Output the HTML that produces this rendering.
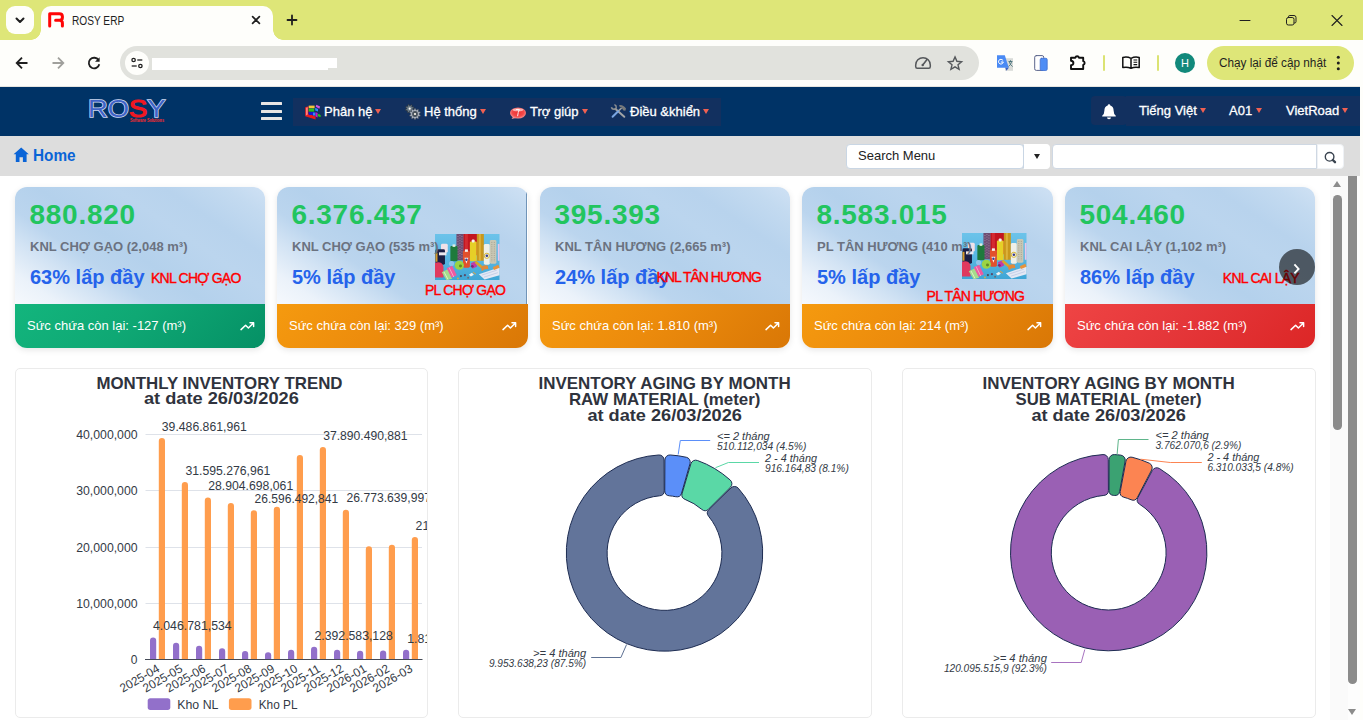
<!DOCTYPE html>
<html lang="vi">
<head>
<meta charset="utf-8">
<title>ROSY ERP</title>
<style>
*{box-sizing:border-box;margin:0;padding:0}
html,body{width:1363px;height:720px;overflow:hidden;background:#fefefb;font-family:"Liberation Sans",sans-serif;}
.abs{position:absolute}
#root{position:relative;width:1363px;height:720px;overflow:hidden;background:#fefefb}
/* ---------- browser chrome ---------- */
#tabbar{left:0;top:0;width:1363px;height:40px;background:#dee678}
#tabdd{left:6px;top:6px;width:28px;height:28px;border-radius:9px;background:#fefefb}
#tab{left:41px;top:6px;width:232px;height:34px;background:#fefefb;border-radius:10px 10px 0 0}
#tab:before,#tab:after{content:"";position:absolute;bottom:0;width:10px;height:10px;background:radial-gradient(circle at 0 0,rgba(0,0,0,0) 9.5px,#fefefb 10px)}
#tab:before{left:-10px}
#tab:after{right:-10px;background:radial-gradient(circle at 100% 0,rgba(0,0,0,0) 9.5px,#fefefb 10px)}
#tabtitle{left:72px;top:14px;font-size:12px;line-height:14px;color:#1f1f1f;white-space:nowrap;transform:scaleX(0.845);transform-origin:0 0}
#toolbar{left:0;top:40px;width:1360px;height:47px;background:#fefefb;border-radius:10px 10px 0 0}
#omni{left:120px;top:46px;width:859px;height:34px;border-radius:17px;background:#e1e2dd}
#siteinfo{left:125px;top:51px;width:24px;height:24px;border-radius:12px;background:#fefefb}
#redact1{left:152px;top:58px;width:185px;height:10px;background:#fff}
#redact2{left:152px;top:68px;width:176px;height:2px;background:#fff}
.sep{width:2px;height:16px;top:55px;background:#dbe373;border-radius:1px}
#avatar{left:1175px;top:53px;width:20px;height:20px;border-radius:10px;background:#12897b;color:#fff;font-size:11px;line-height:20px;text-align:center}
#update{left:1207px;top:46px;width:147px;height:34px;border-radius:17px;background:#dee678}
#updtxt{left:1219px;top:56px;font-size:12px;line-height:14px;color:#1f1f1f;white-space:nowrap;transform:scaleX(0.98);transform-origin:0 0}
/* ---------- app ---------- */
#nav{left:0;top:87px;width:1360px;height:49px;background:#003366}
#menubg{left:293px;top:98px;width:428px;height:28px;background:#12305f}
#bellbg{left:1091px;top:96px;width:36px;height:29px;border-radius:4px;background:#12305f}
#rmenubg{left:1126px;top:96px;width:234px;height:30px;background:#12305f}
.mi{color:#fff;font-size:13px;line-height:18px;top:103px;white-space:nowrap;-webkit-text-stroke:0.3px #fff}
.tri{width:0;height:0;border-left:3.6px solid transparent;border-right:3.6px solid transparent;border-top:5.4px solid #f06052;top:108.8px}
#graybar{left:0;top:136px;width:1360px;height:40px;background:#dddddd}
#home{left:33.3px;top:146.2px;font-size:16.4px;line-height:18px;font-weight:bold;color:#0a64d7;white-space:nowrap;transform:scaleX(0.935);transform-origin:0 0}
.inp{background:#fff;border:1px solid #cfd8e3;top:144px;height:25px}
/* ---------- content ---------- */
#content{left:0;top:176px;width:1330px;height:544px;background:#fff;overflow:hidden}

.card{top:11px;width:250px;height:161px;border-radius:12px;overflow:hidden;box-shadow:0 2px 6px rgba(0,0,0,.10)}
.cbg{left:0;top:0;width:250px;height:118px;background:linear-gradient(34deg,#f6f9fd 0%,#ebf2fa 11%,#d2e3f4 23%,#bbd5ee 33%,#b4d1ec 46%,#bbd5ee 64%,#b8d3ed 76%,#c3daf0 90%,#cfe1f4 100%)}
.cnum{left:14.5px;top:14.2px;font-size:28px;line-height:27px;font-weight:bold;color:#22c55e;white-space:nowrap;letter-spacing:0.72px}
.clab{z-index:2;left:15px;top:52.6px;font-size:13px;line-height:13px;font-weight:bold;color:#6b7280;white-space:nowrap}
.cpct{left:15px;top:79.5px;font-size:20px;line-height:20px;font-weight:bold;color:#2563eb;white-space:nowrap}
.cred{font-size:14px;line-height:14px;color:#ff0000;white-space:nowrap;letter-spacing:-0.75px;-webkit-text-stroke:0.4px #ff0000;margin-top:-1px}
.cfoot{left:0;top:117px;width:100%;height:44px}
.cft{left:12px;top:15px;font-size:13px;line-height:13px;color:#fff;white-space:nowrap}
#nextbtn{left:1279.2px;top:73px;width:35.6px;height:36px;border-radius:18px;background:rgba(0,0,0,.585)}
.ccard{top:192px;width:413px;height:350px;border:1px solid #ebebeb;border-radius:5px;background:#fff}
</style>
</head>
<body>
<div id="root">
<!-- browser chrome -->
<div id="tabbar" class="abs"></div>
<div id="tabdd" class="abs"></div>
<div id="tab" class="abs"></div>
<div id="tabtitle" class="abs">ROSY ERP</div>
<div id="toolbar" class="abs"></div>
<div class="abs" style="left:0;top:86px;width:1360px;height:1px;background:#e6e5e0"></div>
<div id="omni" class="abs"></div>
<div id="siteinfo" class="abs"></div>
<div id="redact1" class="abs"></div>
<div id="redact2" class="abs"></div>
<div class="abs sep" style="left:1103px"></div>
<div class="abs sep" style="left:1157px"></div>
<div id="avatar" class="abs">H</div>
<div id="update" class="abs"></div>
<div id="updtxt" class="abs">Chạy lại để cập nhật</div>
<!-- CHROME-ICONS-START -->
<svg class="abs" style="left:0;top:0" width="1363" height="87" viewBox="0 0 1363 87" fill="none" stroke-linecap="round" stroke-linejoin="round">
<!-- tab dropdown chevron -->
<polyline points="16.5,18.5 20,22 23.5,18.5" stroke="#1f1f1f" stroke-width="2"/>
<!-- favicon R -->
<path d="M49.7 26 V13.8 H59.3 Q62.4 13.8 62.4 16.6 V17.4 Q62.4 20.2 59.3 20.2 H55.6 M59.3 20.2 Q62.4 20.2 62.4 23 V26" stroke="#ff0505" stroke-width="3"/>
<!-- tab close -->
<path d="M252.6 16.6 L259.4 23.4 M259.4 16.6 L252.6 23.4" stroke="#1f1f1f" stroke-width="1.7"/>
<!-- new tab -->
<path d="M287.5 20 H296.5 M292 15.5 V24.5" stroke="#1f1f1f" stroke-width="1.8"/>
<!-- window controls -->
<path d="M1240 20.5 H1250" stroke="#1f1f1f" stroke-width="1"/>
<rect x="1286.5" y="17.5" width="7.5" height="7.5" rx="1.8" stroke="#1f1f1f" stroke-width="1"/>
<path d="M1288.5 17.3 V16.8 Q1288.5 15.5 1289.8 15.5 H1294 Q1296 15.5 1296 17.5 V21.7 Q1296 23 1294.6 23 H1294.2" stroke="#1f1f1f" stroke-width="1"/>
<path d="M1332 15.5 L1342 25.5 M1342 15.5 L1332 25.5" stroke="#1f1f1f" stroke-width="1.1"/>
<!-- back -->
<path d="M27.5 63 H17 M22 57.7 L16.7 63 L22 68.3" stroke="#1f1f1f" stroke-width="1.8" stroke-linecap="butt" stroke-linejoin="miter"/>
<!-- forward -->
<path d="M52.5 63 H63 M58 57.7 L63.3 63 L58 68.3" stroke="#a0a09c" stroke-width="1.8" stroke-linecap="butt" stroke-linejoin="miter"/>
<!-- reload -->
<path d="M98.6 60.2 A5.3 5.3 0 1 0 99.3 64.2" stroke="#1f1f1f" stroke-width="1.8" stroke-linecap="butt"/>
<path d="M99.6 57.2 V61.8 H95 Z" fill="#1f1f1f" stroke="none"/>
<!-- site info -->
<circle cx="133.6" cy="60" r="1.7" stroke="#1f1f1f" stroke-width="1.3"/>
<path d="M137.3 60 H142.3" stroke="#1f1f1f" stroke-width="1.3" stroke-linecap="butt"/>
<circle cx="140.4" cy="66" r="1.7" stroke="#1f1f1f" stroke-width="1.3"/>
<path d="M131.7 66 H136.7" stroke="#1f1f1f" stroke-width="1.3" stroke-linecap="butt"/>
<!-- gauge -->
<path d="M917.2 68.3 Q915.7 68.3 915.7 66.5 V65 A7.3 7.3 0 0 1 930.3 65 V66.5 Q930.3 68.3 928.8 68.3 Z" stroke="#55585b" stroke-width="1.5"/>
<path d="M922.6 65.2 L927 59.6" stroke="#55585b" stroke-width="1.6"/>
<circle cx="922.7" cy="65" r="1.2" fill="#55585b"/>
<!-- star -->
<path d="M955 56.9 L956.9 61.3 L961.6 61.7 L958 64.8 L959.1 69.4 L955 66.9 L950.9 69.4 L952 64.8 L948.4 61.7 L953.1 61.3 Z" stroke="#55585b" stroke-width="1.4" stroke-linejoin="miter"/>
<!-- translate -->
<rect x="1005" y="58.2" width="8" height="12.6" fill="#d9dbd8"/>
<path d="M1009 61.5 h3 M1010.5 60.6 v1 M1011.7 61.8 q-0.8 3 -3 4.6 M1009.3 62 q0.8 3 3 4.4" stroke="#3d6b74" stroke-width="0.8"/>
<path d="M997 55.3 H1004.8 L1008.8 67.8 H997 Z" fill="#4a8af4"/>
<path d="M1005.3 67.8 H1008.8 L1006.4 70.8 Z" fill="#3a5fc0"/>
<path d="M1002.9 60.3 A2.4 2.4 0 1 0 1003.3 62 H1001.2" stroke="#fff" stroke-width="1"/>
<!-- phones -->
<rect x="1034.7" y="55.6" width="9" height="14.8" rx="1.6" fill="#fff" stroke="#5a648a" stroke-width="1"/>
<rect x="1040.2" y="58.3" width="7" height="12.2" rx="1.4" fill="#4e8df5" stroke="#3f6fd0" stroke-width="0.8"/>
<!-- puzzle -->
<path d="M1071 57.7 H1075.3 A1.9 1.9 0 0 1 1079 57.7 H1083.2 V61.2 A1.9 1.9 0 0 1 1083.2 64.9 V69 H1071 V65.2 Q1073.4 65 1073.4 63 Q1073.4 61 1071 60.8 Z" stroke="#111" stroke-width="1.9" stroke-linejoin="round"/>
<!-- reading mode -->
<path d="M1131 58.3 Q1127 56.3 1122.8 57.5 V67.6 Q1127 66.5 1131 68.3 Q1135 66.5 1139.2 67.6 V57.5 Q1135 56.3 1131 58.3 V68.3" stroke="#111" stroke-width="1.5"/>
<path d="M1133.5 60 H1137.2 M1133.5 62.3 H1137.2 M1133.5 64.6 H1137.2" stroke="#111" stroke-width="1.1" stroke-linecap="butt"/>
<!-- dots -->
<circle cx="1338.3" cy="57.3" r="1.5" fill="#1f1f1f"/><circle cx="1338.3" cy="63" r="1.5" fill="#1f1f1f"/><circle cx="1338.3" cy="68.7" r="1.5" fill="#1f1f1f"/>
</svg>
<!-- CHROME-ICONS-END -->
<!-- app nav -->
<div id="nav" class="abs"></div>
<div id="menubg" class="abs"></div>
<div id="bellbg" class="abs"></div>
<div id="rmenubg" class="abs"></div>
<!-- NAV-ITEMS-START -->
<svg class="abs" style="left:80px;top:92px" width="100" height="36" viewBox="80 92 100 36">
<text x="88" y="117.2" font-family="Liberation Sans, sans-serif" font-size="24.6" font-weight="normal" textLength="77.5" lengthAdjust="spacingAndGlyphs" stroke="#cfd9f3" stroke-width="1.5" paint-order="stroke" fill="#3f63c6">RO<tspan fill="#f01822" stroke="#f01822" stroke-width="1.2">S</tspan>Y</text>
<text x="130" y="122.3" font-family="Liberation Sans, sans-serif" font-size="5" font-weight="bold" textLength="34" lengthAdjust="spacingAndGlyphs" fill="#ff2a2a">Software Solutions</text>
</svg>
<div class="abs" style="left:261px;top:102px;width:21px;height:3px;background:#e8e6e4;border-radius:0.5px"></div>
<div class="abs" style="left:261px;top:110px;width:21px;height:3px;background:#e8e6e4;border-radius:0.5px"></div>
<div class="abs" style="left:261px;top:117px;width:21px;height:3px;background:#e8e6e4;border-radius:0.5px"></div>
<div class="abs mi" id="m1" style="left:324px">Phân hệ</div><div class="abs tri" style="left:375px"></div>
<div class="abs mi" id="m2" style="left:424px">Hệ thống</div><div class="abs tri" style="left:480px"></div>
<div class="abs mi" id="m3" style="left:530px">Trợ giúp</div><div class="abs tri" style="left:582px"></div>
<div class="abs mi" id="m4" style="left:630px">Điều &amp;khiển</div><div class="abs tri" style="left:703px"></div>
<div class="abs mi" id="m5" style="left:1139px;top:102px">Tiếng Việt</div><div class="abs tri" style="left:1200px;top:107.8px"></div>
<div class="abs mi" id="m6" style="left:1229px;top:102px">A01</div><div class="abs tri" style="left:1256px;top:107.8px"></div>
<div class="abs mi" id="m7" style="left:1286px;top:102px">VietRoad</div><div class="abs tri" style="left:1342px;top:107.8px"></div>
<svg class="abs" style="left:300px;top:98px" width="840" height="28" viewBox="300 98 840 28" fill="none">
<!-- icon 1: colour blocks -->
<path d="M305.2 107.2 L308.4 106.2 V113.8 L315.6 116.4 V119.6 L305.2 116.2Z" fill="#e81a1a"/>
<path d="M305.9 107.8 L307.8 107.2 V114.4 L305.9 115.4Z" fill="#ff7d7d"/>
<rect x="308.7" y="105.6" width="5.9" height="2.7" fill="#f2c43c"/>
<rect x="308.7" y="108.6" width="5.5" height="3" fill="#23c31f"/>
<rect x="308.7" y="112" width="6.3" height="3" fill="#1818cc"/><rect x="313" y="112.6" width="2.4" height="3" fill="#2f8cf5"/>
<path d="M315.2 107.7 L318 109 V111.6 L315.2 110.4Z" fill="#2d8bff"/>
<path d="M315.5 112.2 L317.6 113 V117.4 L315.5 116.4Z" fill="#c41cc4"/>
<path d="M316.3 104.7 L320.1 106.6 L319.4 108.7 L315.7 106.8Z" fill="#d652e0"/>
<ellipse cx="319.2" cy="115.6" rx="1.8" ry="1.2" transform="rotate(32 319.2 115.6)" fill="#1fc01f"/>
<!-- icon 2: gears -->
<path d="M412.74 109.32 L413.75 110.14 L413.27 111.10 L412.00 110.78 L411.41 111.28 L411.55 112.58 L410.52 112.92 L409.86 111.80 L409.08 111.74 L408.26 112.75 L407.30 112.27 L407.62 111.00 L407.12 110.41 L405.82 110.55 L405.48 109.52 L406.60 108.86 L406.66 108.08 L405.65 107.26 L406.13 106.30 L407.40 106.62 L407.99 106.12 L407.85 104.82 L408.88 104.48 L409.54 105.60 L410.32 105.66 L411.14 104.65 L412.10 105.13 L411.78 106.40 L412.28 106.99 L413.58 106.85 L413.92 107.88 L412.80 108.54Z" fill="#6c7c88" stroke="#2a3038" stroke-width="0.6"/><circle cx="409.7" cy="108.7" r="1.1" fill="#fffaf0"/>
<path d="M419.28 114.43 L420.47 115.18 L420.13 116.25 L418.72 116.16 L418.21 116.86 L418.73 118.18 L417.82 118.84 L416.73 117.93 L415.91 118.20 L415.56 119.57 L414.44 119.57 L414.09 118.20 L413.27 117.94 L412.18 118.84 L411.27 118.18 L411.79 116.87 L411.29 116.17 L409.88 116.26 L409.53 115.19 L410.72 114.43 L410.72 113.57 L409.53 112.82 L409.87 111.75 L411.28 111.84 L411.79 111.14 L411.27 109.82 L412.18 109.16 L413.27 110.07 L414.09 109.80 L414.44 108.43 L415.56 108.43 L415.91 109.80 L416.73 110.06 L417.82 109.16 L418.73 109.82 L418.21 111.13 L418.71 111.83 L420.12 111.74 L420.47 112.81 L419.28 113.57Z" fill="#a9b1bd" stroke="#39414b" stroke-width="0.5"/><circle cx="415" cy="114" r="2.9" fill="#48525c"/><circle cx="415" cy="114" r="1.1" fill="#fffaf0"/>
<!-- icon 3: red bubble -->
<defs><radialGradient id="bubg" cx="0.5" cy="0.45" r="0.6"><stop offset="0" stop-color="#ee2f2f"/><stop offset="0.6" stop-color="#f24a4a"/><stop offset="1" stop-color="#f9a3a3"/></radialGradient></defs>
<path d="M513.2 116.6 L511.6 119 L516.6 117.8Z" fill="#f79a9a"/>
<ellipse cx="518" cy="113" rx="8" ry="5.5" fill="url(#bubg)"/>
<ellipse cx="518" cy="109.8" rx="5.2" ry="1.5" fill="#fbd0d0" opacity="0.75"/>
<path d="M516 109.6 H519.4 Q518 112 517.6 116.2" stroke="#fff" stroke-width="1" fill="none" opacity="0.9"/>
<!-- icon 4: tools -->
<path d="M615.5 109 L624.3 116.8" stroke="#a2a4a6" stroke-width="2" stroke-linecap="round"/>
<path d="M611.4 107.2 q0.6 2.2 2.8 2 l1.6 -0.4 l0.4 -1.6 q0.2 -1.8 -1.8 -2.6" stroke="#8f9193" stroke-width="1.5" fill="none"/>
<path d="M618.2 111.2 L621.6 108" stroke="#9c9ea0" stroke-width="1.7"/>
<path d="M612.6 116.8 L618.2 111.2" stroke="#7aa6e2" stroke-width="2" stroke-linecap="round"/>
<path d="M619 105.2 Q623 104.2 626 108.6 L625.4 110.8 L623.4 110.4 L621.4 107.4 L619.6 106.8Z" fill="#77797b"/>
<!-- bell -->
<path d="M1109 104.3 q1.3 0 1.3 1.2 q3.3 1 3.3 5 q0 3.6 2.2 5.2 v0.9 h-13.6 v-0.9 q2.2 -1.6 2.2 -5.2 q0 -4 3.3 -5 q0 -1.2 1.3 -1.2z" fill="#fff"/>
<path d="M1107 117.6 h4 q0 1.6 -2 1.6 q-2 0 -2 -1.6z" fill="#fff"/>
</svg>
<!-- NAV-ITEMS-END -->
<div id="graybar" class="abs"></div>
<div id="home" class="abs">Home</div>
<!-- GRAYBAR-ITEMS-START -->
<svg class="abs" style="left:13px;top:147px" width="17" height="16" viewBox="0 0 17 16"><path d="M8.2 0.6 L15.8 7.2 H13.6 V15 H9.9 V10.2 H6.5 V15 H2.8 V7.2 H0.6 Z" fill="#0a64d7"/></svg>
<div class="abs inp" style="left:846px;width:178px;border-radius:4px;border-color:#c9d6e4"></div>
<div class="abs" id="sm" style="left:858px;top:147px;font-size:13px;line-height:17px;color:#222;white-space:nowrap">Search Menu</div>
<div class="abs inp" style="left:1023px;width:27px;border-radius:0 4px 4px 0;border-color:#fff;border-left-color:#c9d6e4"></div>
<div class="abs" style="left:1034.3px;top:153.5px;width:0;height:0;border-left:3.4px solid transparent;border-right:3.4px solid transparent;border-top:5.5px solid #222"></div>
<div class="abs inp" style="left:1052px;width:265px;border-radius:4px 0 0 4px"></div>
<div class="abs inp" style="left:1317px;width:27px;border-radius:0 4px 4px 0;border-color:#eef1f5"></div>
<svg class="abs" style="left:1322px;top:149px" width="18" height="18" viewBox="1322 149 18 18" fill="none"><circle cx="1329.6" cy="156.8" r="4.3" stroke="#3a4450" stroke-width="1.4"/><path d="M1332.8 160 L1335 162.2" stroke="#3a4450" stroke-width="2.4" stroke-linecap="round"/></svg>
<!-- GRAYBAR-ITEMS-END -->
<div id="content" class="abs">
<!-- CARDS-START -->
<div class="abs card" style="left:15px"><div class="abs cbg"></div><div class="abs cnum">880.820</div><div class="abs clab">KNL CHỢ GẠO (2,048 m³)</div><div class="abs cpct">63% lấp đầy</div><div class="abs cred" style="left:136.0px;top:85.0px;letter-spacing:-0.75px">KNL CHỢ GẠO</div><div class="abs cfoot" style="background:linear-gradient(135deg,#13b57d 0%,#0fa874 45%,#059065 100%)"><span class="abs cft">Sức chứa còn lại: -127 (m³)</span><svg class="abs" style="left:224px;top:15px" width="18" height="14" viewBox="0 0 18 14" fill="none" stroke="#fff" stroke-width="1.5" stroke-linecap="round" stroke-linejoin="round"><path d="M2 10.6 L6.6 6.2 L9.4 9 L14.2 4.2 M11 3.8 H14.6 V7.4"/></svg></div></div>
<div class="abs card" style="left:277px;width:251px"><div class="abs cbg"></div><div class="abs" style="left:249px;top:4px;width:1px;height:113px;background:#7094b8"></div><div class="abs cnum">6.376.437</div><div class="abs clab">KNL CHỢ GẠO (535 m³)</div><div class="abs cpct">5% lấp đầy</div><svg class="abs spool" style="left:158.2px;top:47px" width="64.5" height="46.2" viewBox="0 0 64.7 46.6" preserveAspectRatio="none">
<defs><linearGradient id="skyg1" x1="0" y1="0" x2="0" y2="1"><stop offset="0" stop-color="#6cc3ea"/><stop offset="0.6" stop-color="#55b4e0"/><stop offset="1" stop-color="#3fa6d6"/></linearGradient></defs>
<rect width="64.7" height="46.6" fill="url(#skyg1)"/>
<rect x="21.5" y="0" width="7.2" height="26.5" fill="#6e4d72"/><path d="M23 2v23M25 1v24M27 2v23" stroke="#b79ab0" stroke-width="0.7" stroke-dasharray="1 1.6"/>
<rect x="28.5" y="0" width="13.6" height="21.5" fill="#c3151f"/><rect x="30" y="0" width="3" height="21.5" fill="#d42a30"/>
<rect x="42" y="0" width="7" height="27" fill="#c9971c"/><rect x="44" y="0" width="2" height="27" fill="#ddb23a"/>
<rect x="35" y="7.5" width="6.8" height="20" rx="1" fill="#e6cf27"/><rect x="36.8" y="5.5" width="3" height="3" rx="1" fill="#f4f4ee"/>
<rect x="15.4" y="12" width="7.2" height="15.5" rx="1" fill="#1e7a3c"/><rect x="17.6" y="10.5" width="2.8" height="2.5" fill="#dfeee2"/>
<rect x="49" y="10" width="6" height="21" rx="1.5" fill="#efefe8"/><circle cx="52" cy="22" r="2.6" fill="none" stroke="#d8b636" stroke-width="1"/><circle cx="52" cy="22" r="1.3" fill="#3a3f8c"/>
<rect x="55" y="6" width="6.6" height="24" rx="1.5" fill="#c9c7b4"/><path d="M57 8v20M59.5 8v20" stroke="#8f8d7c" stroke-width="0.6" stroke-dasharray="1 1.2"/>
<rect x="63" y="10" width="1.7" height="17" fill="#e9c6e8"/>
<rect x="6" y="9.8" width="6.8" height="9" rx="1.5" fill="#f1e1e8"/>
<rect x="0.5" y="15.5" width="9.5" height="15.5" rx="1.5" fill="#1b1f45"/><rect x="4" y="18.5" width="7.5" height="3" fill="#ece8ee"/><rect x="0.5" y="19" width="2" height="9" fill="#d89a2a"/>
<path d="M0 29 Q7 27 8.5 33 V44 H0Z" fill="#e03a5e"/>
<rect x="28" y="17" width="7" height="17" rx="1.5" fill="#e2502c"/><rect x="30" y="15.5" width="3" height="2.5" fill="#f3f3f0"/><path d="M29.5 24h4l-2 6z" fill="#f4f4f4"/><circle cx="31.5" cy="26" r="1.2" fill="#3b3f94"/>
<circle cx="24.4" cy="31.5" r="4.6" fill="#9bd444"/><circle cx="25.6" cy="32.2" r="1.5" fill="#5f8a24"/>
<circle cx="16.6" cy="29.8" r="2.6" fill="#8fc4ea"/>
<path d="M6.8 38.5 l6 -3 l4.4 9.6 l-5.6 1.5z" fill="#a5dc8c"/><path d="M9 38.2l4 7.6" stroke="#e9f5d8" stroke-width="0.8"/>
<path d="M11.8 34.6 l5.4 -2.6 l4.6 9.6 l-5.2 2.6z" fill="#ef5aa0"/><path d="M14.2 33.8l4.6 9.6" stroke="#f9b6d4" stroke-width="0.8"/>
<path d="M36 29.5 l4.6 -2 l1.6 5.4 l-4.6 2.2z" fill="#c23aa8"/><circle cx="37.4" cy="32.6" r="1.4" fill="#7a2a6e"/>
<path d="M40.5 28 l6.5 5.5" stroke="#d8a52c" stroke-width="2.6"/>
<path d="M46 33.5 q3 -3 7 -1.5 l0.5 3.5 q-4 -0.5 -6.5 2z" fill="#e28a3a"/>
<path d="M44 40.5 l19.5 -6.5 l1.2 0 v7.5 l-15 4.5z" fill="#e4e8f4"/><path d="M47 41.5l15-5M49 43.6l14-4.6" stroke="#b8c4e2" stroke-width="0.7"/>
<path d="M58 33.5 l5.5 -2.5 l1.2 3 l-5.5 2.2z" fill="#e8933a"/>
<circle cx="26" cy="42.5" r="1.1" fill="#4a4a5a"/><circle cx="30" cy="41.5" r="1.1" fill="#5a4a6a"/><circle cx="33.2" cy="44.2" r="1" fill="#6a6a7a"/><circle cx="23" cy="45" r="1" fill="#c8b04a"/>
<path d="M34 41 l3 -2 l2 2 l-3 2z" fill="#f0f0f0"/><path d="M38 38.5 l3 2" stroke="#e8a23a" stroke-width="1"/>
</svg><div class="abs cred" style="left:148.0px;top:96.6px;letter-spacing:-0.75px">PL CHỢ GẠO</div><div class="abs cfoot" style="background:linear-gradient(135deg,#f59a0f 0%,#ec8b0c 45%,#d97706 100%)"><span class="abs cft">Sức chứa còn lại: 329 (m³)</span><svg class="abs" style="left:224px;top:15px" width="18" height="14" viewBox="0 0 18 14" fill="none" stroke="#fff" stroke-width="1.5" stroke-linecap="round" stroke-linejoin="round"><path d="M2 10.6 L6.6 6.2 L9.4 9 L14.2 4.2 M11 3.8 H14.6 V7.4"/></svg></div></div>
<div class="abs card" style="left:540px"><div class="abs cbg"></div><div class="abs cnum">395.393</div><div class="abs clab">KNL TÂN HƯƠNG (2,665 m³)</div><div class="abs cpct">24% lấp đầy</div><div class="abs cred" style="left:116.6px;top:84.0px;letter-spacing:-1.0px">KNL TÂN HƯƠNG</div><div class="abs cfoot" style="background:linear-gradient(135deg,#f59a0f 0%,#ec8b0c 45%,#d97706 100%)"><span class="abs cft">Sức chứa còn lại: 1.810 (m³)</span><svg class="abs" style="left:224px;top:15px" width="18" height="14" viewBox="0 0 18 14" fill="none" stroke="#fff" stroke-width="1.5" stroke-linecap="round" stroke-linejoin="round"><path d="M2 10.6 L6.6 6.2 L9.4 9 L14.2 4.2 M11 3.8 H14.6 V7.4"/></svg></div></div>
<div class="abs card" style="left:802px;width:251px"><div class="abs cbg" style="width:251px"></div><div class="abs cnum">8.583.015</div><div class="abs clab">PL TÂN HƯƠNG (410 m³)</div><div class="abs cpct">5% lấp đầy</div><svg class="abs spool" style="left:160.3px;top:46px" width="64.5" height="46.2" viewBox="0 0 64.7 46.6" preserveAspectRatio="none">
<defs><linearGradient id="skyg2" x1="0" y1="0" x2="0" y2="1"><stop offset="0" stop-color="#6cc3ea"/><stop offset="0.6" stop-color="#55b4e0"/><stop offset="1" stop-color="#3fa6d6"/></linearGradient></defs>
<rect width="64.7" height="46.6" fill="url(#skyg2)"/>
<rect x="21.5" y="0" width="7.2" height="26.5" fill="#6e4d72"/><path d="M23 2v23M25 1v24M27 2v23" stroke="#b79ab0" stroke-width="0.7" stroke-dasharray="1 1.6"/>
<rect x="28.5" y="0" width="13.6" height="21.5" fill="#c3151f"/><rect x="30" y="0" width="3" height="21.5" fill="#d42a30"/>
<rect x="42" y="0" width="7" height="27" fill="#c9971c"/><rect x="44" y="0" width="2" height="27" fill="#ddb23a"/>
<rect x="35" y="7.5" width="6.8" height="20" rx="1" fill="#e6cf27"/><rect x="36.8" y="5.5" width="3" height="3" rx="1" fill="#f4f4ee"/>
<rect x="15.4" y="12" width="7.2" height="15.5" rx="1" fill="#1e7a3c"/><rect x="17.6" y="10.5" width="2.8" height="2.5" fill="#dfeee2"/>
<rect x="49" y="10" width="6" height="21" rx="1.5" fill="#efefe8"/><circle cx="52" cy="22" r="2.6" fill="none" stroke="#d8b636" stroke-width="1"/><circle cx="52" cy="22" r="1.3" fill="#3a3f8c"/>
<rect x="55" y="6" width="6.6" height="24" rx="1.5" fill="#c9c7b4"/><path d="M57 8v20M59.5 8v20" stroke="#8f8d7c" stroke-width="0.6" stroke-dasharray="1 1.2"/>
<rect x="63" y="10" width="1.7" height="17" fill="#e9c6e8"/>
<rect x="6" y="9.8" width="6.8" height="9" rx="1.5" fill="#f1e1e8"/>
<rect x="0.5" y="15.5" width="9.5" height="15.5" rx="1.5" fill="#1b1f45"/><rect x="4" y="18.5" width="7.5" height="3" fill="#ece8ee"/><rect x="0.5" y="19" width="2" height="9" fill="#d89a2a"/>
<path d="M0 29 Q7 27 8.5 33 V44 H0Z" fill="#e03a5e"/>
<rect x="28" y="17" width="7" height="17" rx="1.5" fill="#e2502c"/><rect x="30" y="15.5" width="3" height="2.5" fill="#f3f3f0"/><path d="M29.5 24h4l-2 6z" fill="#f4f4f4"/><circle cx="31.5" cy="26" r="1.2" fill="#3b3f94"/>
<circle cx="24.4" cy="31.5" r="4.6" fill="#9bd444"/><circle cx="25.6" cy="32.2" r="1.5" fill="#5f8a24"/>
<circle cx="16.6" cy="29.8" r="2.6" fill="#8fc4ea"/>
<path d="M6.8 38.5 l6 -3 l4.4 9.6 l-5.6 1.5z" fill="#a5dc8c"/><path d="M9 38.2l4 7.6" stroke="#e9f5d8" stroke-width="0.8"/>
<path d="M11.8 34.6 l5.4 -2.6 l4.6 9.6 l-5.2 2.6z" fill="#ef5aa0"/><path d="M14.2 33.8l4.6 9.6" stroke="#f9b6d4" stroke-width="0.8"/>
<path d="M36 29.5 l4.6 -2 l1.6 5.4 l-4.6 2.2z" fill="#c23aa8"/><circle cx="37.4" cy="32.6" r="1.4" fill="#7a2a6e"/>
<path d="M40.5 28 l6.5 5.5" stroke="#d8a52c" stroke-width="2.6"/>
<path d="M46 33.5 q3 -3 7 -1.5 l0.5 3.5 q-4 -0.5 -6.5 2z" fill="#e28a3a"/>
<path d="M44 40.5 l19.5 -6.5 l1.2 0 v7.5 l-15 4.5z" fill="#e4e8f4"/><path d="M47 41.5l15-5M49 43.6l14-4.6" stroke="#b8c4e2" stroke-width="0.7"/>
<path d="M58 33.5 l5.5 -2.5 l1.2 3 l-5.5 2.2z" fill="#e8933a"/>
<circle cx="26" cy="42.5" r="1.1" fill="#4a4a5a"/><circle cx="30" cy="41.5" r="1.1" fill="#5a4a6a"/><circle cx="33.2" cy="44.2" r="1" fill="#6a6a7a"/><circle cx="23" cy="45" r="1" fill="#c8b04a"/>
<path d="M34 41 l3 -2 l2 2 l-3 2z" fill="#f0f0f0"/><path d="M38 38.5 l3 2" stroke="#e8a23a" stroke-width="1"/>
</svg><div class="abs cred" style="left:124.6px;top:102.6px;letter-spacing:-0.8px">PL TÂN HƯƠNG</div><div class="abs cfoot" style="background:linear-gradient(135deg,#f59a0f 0%,#ec8b0c 45%,#d97706 100%)"><span class="abs cft">Sức chứa còn lại: 214 (m³)</span><svg class="abs" style="left:224px;top:15px" width="18" height="14" viewBox="0 0 18 14" fill="none" stroke="#fff" stroke-width="1.5" stroke-linecap="round" stroke-linejoin="round"><path d="M2 10.6 L6.6 6.2 L9.4 9 L14.2 4.2 M11 3.8 H14.6 V7.4"/></svg></div></div>
<div class="abs card" style="left:1065px"><div class="abs cbg"></div><div class="abs cnum">504.460</div><div class="abs clab">KNL CAI LẬY (1,102 m³)</div><div class="abs cpct">86% lấp đầy</div><div class="abs cred" style="left:157.8px;top:84.6px;letter-spacing:-0.75px">KNL CAI LẬY</div><div class="abs cfoot" style="background:linear-gradient(135deg,#ef4444 0%,#e5373a 45%,#dc2626 100%)"><span class="abs cft">Sức chứa còn lại: -1.882 (m³)</span><svg class="abs" style="left:224px;top:15px" width="18" height="14" viewBox="0 0 18 14" fill="none" stroke="#fff" stroke-width="1.5" stroke-linecap="round" stroke-linejoin="round"><path d="M2 10.6 L6.6 6.2 L9.4 9 L14.2 4.2 M11 3.8 H14.6 V7.4"/></svg></div></div>
<div class="abs" id="nextbtn"><svg width="36" height="36" viewBox="0 0 36 36" fill="none"><path d="M15.4 15.4 L19.6 19.9 L15.4 24.4" stroke="#fff" stroke-width="1.9"/></svg></div>
<!-- CARDS-END -->
<!-- CHARTS-START -->
<div class="abs ccard" style="left:15px;width:413px"></div>
<svg class="abs" style="left:15px;top:192px" width="412" height="350" viewBox="15 368 412 350" font-family="Liberation Sans, sans-serif">
<text x="96.4" y="388.6" font-size="16.4" font-weight="bold" fill="#2f333d" textLength="246.1" lengthAdjust="spacingAndGlyphs">MONTHLY INVENTORY TREND</text>
<text x="144.0" y="404.4" font-size="16.4" font-weight="bold" fill="#2f333d" textLength="154.8" lengthAdjust="spacingAndGlyphs">at date 26/03/2026</text>
<path d="M145.5 434.5 H422" stroke="#dee2e9" stroke-width="1"/>
<path d="M145.5 490.5 H422" stroke="#dee2e9" stroke-width="1"/>
<path d="M145.5 547.5 H422" stroke="#dee2e9" stroke-width="1"/>
<path d="M145.5 603.5 H422" stroke="#dee2e9" stroke-width="1"/>
<text x="137.6" y="438.8" font-size="12" fill="#333a45" text-anchor="end" textLength="61.4" lengthAdjust="spacingAndGlyphs">40,000,000</text>
<text x="137.6" y="494.8" font-size="12" fill="#333a45" text-anchor="end" textLength="61.4" lengthAdjust="spacingAndGlyphs">30,000,000</text>
<text x="137.6" y="551.8" font-size="12" fill="#333a45" text-anchor="end" textLength="61.4" lengthAdjust="spacingAndGlyphs">20,000,000</text>
<text x="137.6" y="607.8" font-size="12" fill="#333a45" text-anchor="end" textLength="61.4" lengthAdjust="spacingAndGlyphs">10,000,000</text>
<text x="137.4" y="663.8" font-size="12" fill="#333a45" text-anchor="end">0</text>
<path d="M150.00 659.3 V640.6 A3.1 3.1 0 0 1 156.20 640.6 V659.3 Z" fill="#9270CA"/>
<path d="M158.80 659.3 V441.1 A3.1 3.1 0 0 1 165.00 441.1 V659.3 Z" fill="#FF9D4D"/>
<path d="M173.00 659.3 V645.9 A3.1 3.1 0 0 1 179.20 645.9 V659.3 Z" fill="#9270CA"/>
<path d="M181.80 659.3 V485.1 A3.1 3.1 0 0 1 188.00 485.1 V659.3 Z" fill="#FF9D4D"/>
<path d="M196.00 659.3 V648.9 A3.1 3.1 0 0 1 202.20 648.9 V659.3 Z" fill="#9270CA"/>
<path d="M204.80 659.3 V500.7 A3.1 3.1 0 0 1 211.00 500.7 V659.3 Z" fill="#FF9D4D"/>
<path d="M219.00 659.3 V651.4 A3.1 3.1 0 0 1 225.20 651.4 V659.3 Z" fill="#9270CA"/>
<path d="M227.80 659.3 V506.1 A3.1 3.1 0 0 1 234.00 506.1 V659.3 Z" fill="#FF9D4D"/>
<path d="M242.00 659.3 V654.1 A3.1 3.1 0 0 1 248.20 654.1 V659.3 Z" fill="#9270CA"/>
<path d="M250.80 659.3 V513.4 A3.1 3.1 0 0 1 257.00 513.4 V659.3 Z" fill="#FF9D4D"/>
<path d="M265.00 659.3 V655.3 A3.1 3.1 0 0 1 271.20 655.3 V659.3 Z" fill="#9270CA"/>
<path d="M273.80 659.3 V509.9 A3.1 3.1 0 0 1 280.00 509.9 V659.3 Z" fill="#FF9D4D"/>
<path d="M288.00 659.3 V652.8 A3.1 3.1 0 0 1 294.20 652.8 V659.3 Z" fill="#9270CA"/>
<path d="M296.80 659.3 V458.0 A3.1 3.1 0 0 1 303.00 458.0 V659.3 Z" fill="#FF9D4D"/>
<path d="M311.00 659.3 V649.8 A3.1 3.1 0 0 1 317.20 649.8 V659.3 Z" fill="#9270CA"/>
<path d="M319.80 659.3 V450.1 A3.1 3.1 0 0 1 326.00 450.1 V659.3 Z" fill="#FF9D4D"/>
<path d="M334.00 659.3 V652.8 A3.1 3.1 0 0 1 340.20 652.8 V659.3 Z" fill="#9270CA"/>
<path d="M342.80 659.3 V512.8 A3.1 3.1 0 0 1 349.00 512.8 V659.3 Z" fill="#FF9D4D"/>
<path d="M357.00 659.3 V653.9 A3.1 3.1 0 0 1 363.20 653.9 V659.3 Z" fill="#9270CA"/>
<path d="M365.80 659.3 V549.4 A3.1 3.1 0 0 1 372.00 549.4 V659.3 Z" fill="#FF9D4D"/>
<path d="M380.00 659.3 V653.6 A3.1 3.1 0 0 1 386.20 653.6 V659.3 Z" fill="#9270CA"/>
<path d="M388.80 659.3 V547.8 A3.1 3.1 0 0 1 395.00 547.8 V659.3 Z" fill="#FF9D4D"/>
<path d="M403.00 659.3 V652.8 A3.1 3.1 0 0 1 409.20 652.8 V659.3 Z" fill="#9270CA"/>
<path d="M411.80 659.3 V540.1 A3.1 3.1 0 0 1 418.00 540.1 V659.3 Z" fill="#FF9D4D"/>
<path d="M145 659.5 H422.5" stroke="#444a56" stroke-width="1"/>
<text x="161.8" y="431.1" font-size="12" fill="#333a45" textLength="85.0" lengthAdjust="spacingAndGlyphs">39.486.861,961</text>
<text x="185.4" y="474.9" font-size="12" fill="#333a45" textLength="85.0" lengthAdjust="spacingAndGlyphs">31.595.276,961</text>
<text x="208.2" y="489.9" font-size="12" fill="#333a45" textLength="85.0" lengthAdjust="spacingAndGlyphs">28.904.698,061</text>
<text x="254.6" y="502.9" font-size="12" fill="#333a45" textLength="83.6" lengthAdjust="spacingAndGlyphs">26.596.492,841</text>
<text x="323.2" y="439.9" font-size="12" fill="#333a45" textLength="84.4" lengthAdjust="spacingAndGlyphs">37.890.490,881</text>
<text x="346.6" y="502.3" font-size="12" fill="#333a45" textLength="84.4" lengthAdjust="spacingAndGlyphs">26.773.639,997</text>
<text x="415.6" y="529.7" font-size="12" fill="#333a45" textLength="78.5" lengthAdjust="spacingAndGlyphs">21.803.515,12</text>
<text x="153.0" y="630.0" font-size="12" fill="#333a45" textLength="78.7" lengthAdjust="spacingAndGlyphs">4.046.781,534</text>
<text x="314.5" y="640.0" font-size="12" fill="#333a45" textLength="78.3" lengthAdjust="spacingAndGlyphs">2.392.583,128</text>
<text x="407.2" y="643.0" font-size="12" fill="#333a45" textLength="72.0" lengthAdjust="spacingAndGlyphs">1.812.645,37</text>
<text transform="translate(158.3,667.4) rotate(-30)" font-size="12" fill="#333a45" text-anchor="end" dy="4.2" textLength="43.5" lengthAdjust="spacingAndGlyphs">2025-04</text>
<text transform="translate(181.3,667.4) rotate(-30)" font-size="12" fill="#333a45" text-anchor="end" dy="4.2" textLength="43.5" lengthAdjust="spacingAndGlyphs">2025-05</text>
<text transform="translate(204.3,667.4) rotate(-30)" font-size="12" fill="#333a45" text-anchor="end" dy="4.2" textLength="43.5" lengthAdjust="spacingAndGlyphs">2025-06</text>
<text transform="translate(227.3,667.4) rotate(-30)" font-size="12" fill="#333a45" text-anchor="end" dy="4.2" textLength="43.5" lengthAdjust="spacingAndGlyphs">2025-07</text>
<text transform="translate(250.3,667.4) rotate(-30)" font-size="12" fill="#333a45" text-anchor="end" dy="4.2" textLength="43.5" lengthAdjust="spacingAndGlyphs">2025-08</text>
<text transform="translate(273.3,667.4) rotate(-30)" font-size="12" fill="#333a45" text-anchor="end" dy="4.2" textLength="43.5" lengthAdjust="spacingAndGlyphs">2025-09</text>
<text transform="translate(296.3,667.4) rotate(-30)" font-size="12" fill="#333a45" text-anchor="end" dy="4.2" textLength="43.5" lengthAdjust="spacingAndGlyphs">2025-10</text>
<text transform="translate(319.3,667.4) rotate(-30)" font-size="12" fill="#333a45" text-anchor="end" dy="4.2" textLength="43.5" lengthAdjust="spacingAndGlyphs">2025-11</text>
<text transform="translate(342.3,667.4) rotate(-30)" font-size="12" fill="#333a45" text-anchor="end" dy="4.2" textLength="43.5" lengthAdjust="spacingAndGlyphs">2025-12</text>
<text transform="translate(365.3,667.4) rotate(-30)" font-size="12" fill="#333a45" text-anchor="end" dy="4.2" textLength="43.5" lengthAdjust="spacingAndGlyphs">2026-01</text>
<text transform="translate(388.3,667.4) rotate(-30)" font-size="12" fill="#333a45" text-anchor="end" dy="4.2" textLength="43.5" lengthAdjust="spacingAndGlyphs">2026-02</text>
<text transform="translate(411.3,667.4) rotate(-30)" font-size="12" fill="#333a45" text-anchor="end" dy="4.2" textLength="43.5" lengthAdjust="spacingAndGlyphs">2026-03</text>
<rect x="147.7" y="698.2" width="22.6" height="11.7" rx="2.6" fill="#9270CA"/>
<text x="177.3" y="708.9" font-size="12.6" fill="#333a45" textLength="41.1" lengthAdjust="spacingAndGlyphs">Kho NL</text>
<rect x="228.9" y="698.2" width="22.6" height="11.7" rx="2.6" fill="#FF9D4D"/>
<text x="258.7" y="708.9" font-size="12.6" fill="#333a45" textLength="38.8" lengthAdjust="spacingAndGlyphs">Kho PL</text>
</svg>
<div class="abs ccard" style="left:458px;width:414px"></div>
<svg class="abs" style="left:458px;top:192px" width="413" height="350" viewBox="458 368 413 350" font-family="Liberation Sans, sans-serif">
<text x="538.5" y="388.8" font-size="16.4" font-weight="bold" fill="#2f333d" textLength="252.2" lengthAdjust="spacingAndGlyphs">INVENTORY AGING BY MONTH</text>
<text x="568.9" y="404.6" font-size="16.4" font-weight="bold" fill="#2f333d" textLength="191.5" lengthAdjust="spacingAndGlyphs">RAW MATERIAL (meter)</text>
<text x="587.4" y="420.6" font-size="16.4" font-weight="bold" fill="#2f333d" textLength="154.5" lengthAdjust="spacingAndGlyphs">at date 26/03/2026</text>
<path d="M664.92 459.94 A5.00 5.00 0 0 1 670.21 454.97 A98.20 98.20 0 0 1 686.37 457.27 A5.00 5.00 0 0 1 690.06 463.51 L681.58 493.19 A5.00 5.00 0 0 1 675.79 496.72 A57.40 57.40 0 0 0 669.36 495.81 A5.00 5.00 0 0 1 664.78 490.80 Z" fill="#5B8FF9" stroke="#1d2c52" stroke-width="1" stroke-linejoin="round"/>
<path d="M690.87 463.75 A5.00 5.00 0 0 1 697.33 460.45 A98.20 98.20 0 0 1 730.24 480.05 A5.00 5.00 0 0 1 730.42 487.31 L708.56 509.10 A5.00 5.00 0 0 1 701.78 509.36 A57.40 57.40 0 0 0 685.12 499.43 A5.00 5.00 0 0 1 682.12 493.35 Z" fill="#5AD8A6" stroke="#1d2c52" stroke-width="1" stroke-linejoin="round"/>
<path d="M731.01 487.91 A5.00 5.00 0 0 1 738.27 488.18 A98.20 98.20 0 1 1 658.79 454.97 A5.00 5.00 0 0 1 664.08 459.94 L664.22 490.80 A5.00 5.00 0 0 1 659.64 495.81 A57.40 57.40 0 1 0 708.61 516.27 A5.00 5.00 0 0 1 708.95 509.50 Z" fill="#62749a" stroke="#1d2c52" stroke-width="1" stroke-linejoin="round"/>
<path d="M678.2 454.5 L680.3 440.5 H710.2" fill="none" stroke="#5B8FF9" stroke-width="1"/>
<text x="717.0" y="439.8" font-size="11.6" font-style="italic" fill="#333a45" text-anchor="start" textLength="52.7" lengthAdjust="spacingAndGlyphs">&lt;= 2 tháng</text>
<text x="717.0" y="450.0" font-size="11.6" font-style="italic" fill="#333a45" text-anchor="start" textLength="89.3" lengthAdjust="spacingAndGlyphs">510.112,034 (4.5%)</text>
<path d="M715.5 467.7 L728.4 462.5 H759" fill="none" stroke="#5AD8A6" stroke-width="1"/>
<text x="765.0" y="461.6" font-size="11.6" font-style="italic" fill="#333a45" text-anchor="start" textLength="52.0" lengthAdjust="spacingAndGlyphs">2 - 4 tháng</text>
<text x="765.0" y="471.6" font-size="11.6" font-style="italic" fill="#333a45" text-anchor="start" textLength="83.8" lengthAdjust="spacingAndGlyphs">916.164,83 (8.1%)</text>
<path d="M626.6 644.5 L620.9 657.5 H591.2" fill="none" stroke="#5D7092" stroke-width="1"/>
<text x="586.2" y="656.7" font-size="11.6" font-style="italic" fill="#333a45" text-anchor="end" textLength="53.1" lengthAdjust="spacingAndGlyphs">&gt;= 4 tháng</text>
<text x="586.2" y="666.6" font-size="11.6" font-style="italic" fill="#333a45" text-anchor="end" textLength="97.3" lengthAdjust="spacingAndGlyphs">9.953.638,23 (87.5%)</text>
</svg>
<div class="abs ccard" style="left:902px;width:414px"></div>
<svg class="abs" style="left:902px;top:192px" width="413" height="350" viewBox="902 368 413 350" font-family="Liberation Sans, sans-serif">
<text x="982.5" y="388.8" font-size="16.4" font-weight="bold" fill="#2f333d" textLength="252.2" lengthAdjust="spacingAndGlyphs">INVENTORY AGING BY MONTH</text>
<text x="1015.5" y="404.6" font-size="16.4" font-weight="bold" fill="#2f333d" textLength="186.0" lengthAdjust="spacingAndGlyphs">SUB MATERIAL (meter)</text>
<text x="1031.4" y="420.6" font-size="16.4" font-weight="bold" fill="#2f333d" textLength="154.5" lengthAdjust="spacingAndGlyphs">at date 26/03/2026</text>
<path d="M1109.12 459.54 A5.00 5.00 0 0 1 1114.41 454.57 A98.20 98.20 0 0 1 1120.85 455.15 A5.00 5.00 0 0 1 1125.15 461.00 L1119.70 491.38 A5.00 5.00 0 0 1 1114.29 495.47 A57.40 57.40 0 0 0 1113.56 495.41 A5.00 5.00 0 0 1 1108.98 490.40 Z" fill="#3ba272" stroke="#1d2c52" stroke-width="1" stroke-linejoin="round"/>
<path d="M1125.98 461.15 A5.00 5.00 0 0 1 1132.08 457.22 A98.20 98.20 0 0 1 1149.25 463.16 A5.00 5.00 0 0 1 1151.62 470.02 L1137.38 497.41 A5.00 5.00 0 0 1 1131.00 499.71 A57.40 57.40 0 0 0 1123.84 497.23 A5.00 5.00 0 0 1 1120.25 491.48 Z" fill="#fc8452" stroke="#1d2c52" stroke-width="1" stroke-linejoin="round"/>
<path d="M1152.36 470.41 A5.00 5.00 0 0 1 1159.35 468.47 A98.20 98.20 0 1 1 1102.99 454.57 A5.00 5.00 0 0 1 1108.28 459.54 L1108.42 490.40 A5.00 5.00 0 0 1 1103.84 495.41 A57.40 57.40 0 1 0 1139.60 504.23 A5.00 5.00 0 0 1 1137.88 497.67 Z" fill="#9a60b4" stroke="#1d2c52" stroke-width="1" stroke-linejoin="round"/>
<path d="M1117.1 454.5 L1118.4 439.5 H1148.5" fill="none" stroke="#5fb58b" stroke-width="1"/>
<text x="1155.5" y="439.2" font-size="11.6" font-style="italic" fill="#333a45" text-anchor="start" textLength="53.2" lengthAdjust="spacingAndGlyphs">&lt;= 2 tháng</text>
<text x="1155.5" y="448.9" font-size="11.6" font-style="italic" fill="#333a45" text-anchor="start" textLength="85.8" lengthAdjust="spacingAndGlyphs">3.762.070,6 (2.9%)</text>
<path d="M1140.5 459.2 L1170.3 462.5 H1201.8" fill="none" stroke="#fc8452" stroke-width="1"/>
<text x="1207.4" y="460.8" font-size="11.6" font-style="italic" fill="#333a45" text-anchor="start" textLength="52.0" lengthAdjust="spacingAndGlyphs">2 - 4 tháng</text>
<text x="1207.4" y="470.6" font-size="11.6" font-style="italic" fill="#333a45" text-anchor="start" textLength="86.3" lengthAdjust="spacingAndGlyphs">6.310.033,5 (4.8%)</text>
<path d="M1084.8 649.5 L1081.2 662.5 H1051.2" fill="none" stroke="#a873c0" stroke-width="1"/>
<text x="1046.9" y="661.7" font-size="11.6" font-style="italic" fill="#333a45" text-anchor="end" textLength="53.8" lengthAdjust="spacingAndGlyphs">&gt;= 4 tháng</text>
<text x="1046.9" y="671.6" font-size="11.6" font-style="italic" fill="#333a45" text-anchor="end" textLength="103.0" lengthAdjust="spacingAndGlyphs">120.095.515,9 (92.3%)</text>
</svg>
<!-- CHARTS-END -->
</div>
<!-- SCROLLBARS-START -->
<div class="abs" style="left:1330px;top:176px;width:18px;height:544px;background:#fafafa"></div>
<div class="abs" style="left:1333px;top:181px;width:0;height:0;border-left:4.5px solid transparent;border-right:4.5px solid transparent;border-bottom:6.5px solid #8b8b8b"></div>
<div class="abs" style="left:1333.3px;top:194.5px;width:8.7px;height:235.5px;border-radius:4.4px;background:#8b8b8b"></div>
<div class="abs" style="left:1348px;top:176px;width:12px;height:544px;background:#fdfdfd"></div>
<div class="abs" style="left:1348.2px;top:176px;width:8.6px;height:508px;border-radius:0 0 4.3px 4.3px;background:#8b8b8b"></div>
<div class="abs" style="left:1347.8px;top:709px;width:0;height:0;border-left:4.5px solid transparent;border-right:4.5px solid transparent;border-top:6.5px solid #8b8b8b"></div>
<!-- SCROLLBARS-END -->
</div>
</body>
</html>
